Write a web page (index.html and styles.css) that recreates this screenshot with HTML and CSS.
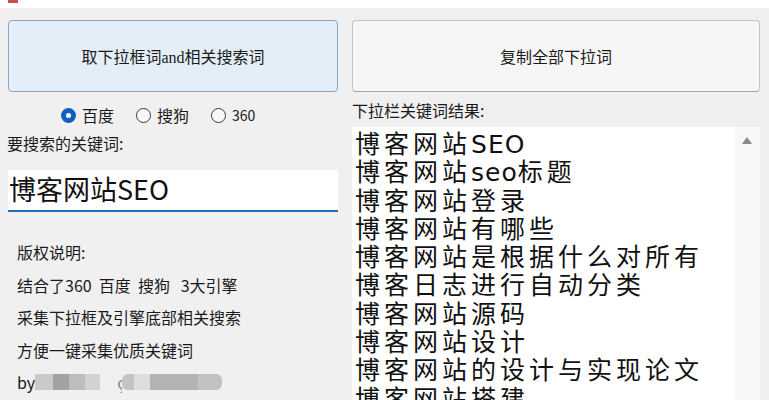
FILE: index.html
```html
<!DOCTYPE html>
<html lang="zh">
<head>
<meta charset="utf-8">
<title>下拉词采集</title>
<link rel="stylesheet" href="styles.css">
</head>
<body>
<div class="titlebar"><span class="appicon"></span></div>
<div class="main">
  <div class="col left">
    <button class="btn primary">取下拉框词<span class="serif">and</span>相关搜索词</button>
    <div class="radios">
      <label class="radio"><span class="dot checked"></span>百度</label>
      <label class="radio"><span class="dot"></span>搜狗</label>
      <label class="radio small"><span class="dot"></span>360</label>
    </div>
    <div class="label">要搜索的关键词:</div>
    <div class="input">博客网站SEO</div>
    <div class="notes">
      <div>版权说明:</div>
      <div>结合了360&nbsp; 百度&nbsp; 搜狗&nbsp;&nbsp; 3大引擎</div>
      <div>采集下拉框及引擎底部相关搜索</div>
      <div>方便一键采集优质关键词</div>
      <div class="by">by<span class="blur b1"></span><span class="blur b2"></span><span class="blur b3"></span><span class="blur b4"></span><span class="gap"></span><span class="ch">ç</span><span class="blur b5"></span><span class="blur b6"></span><span class="blur b7"></span><span class="blur b8"></span></div>
    </div>
  </div>
  <div class="col right">
    <button class="btn">复制全部下拉词</button>
    <div class="label">下拉栏关键词结果:</div>
    <div class="listbox">
      <div class="items">
        <div class="item">博客网站<span class="lat">SEO</span></div>
        <div class="item">博客网站<span class="lat">seo</span>标题</div>
        <div class="item">博客网站登录</div>
        <div class="item">博客网站有哪些</div>
        <div class="item">博客网站是根据什么对所有</div>
        <div class="item">博客日志进行自动分类</div>
        <div class="item">博客网站源码</div>
        <div class="item">博客网站设计</div>
        <div class="item">博客网站的设计与实现论文</div>
        <div class="item">博客网站搭建</div>
      </div>
      <div class="scrollbar"><span class="arrow"></span></div>
    </div>
  </div>
</div>
</body>
</html>
```
FILE: styles.css
```css
html, body {
  margin: 0;
  padding: 0;
  height: 100%;
  overflow: hidden;
}
body {
  background: #f0f0f0;
  font-family: "Noto Sans CJK SC", "Noto Sans", sans-serif;
  color: #1a1a1a;
}
.titlebar {
  height: 8px;
  background: #ffffff;
}
.appicon {
  display: block;
  margin-left: 8px;
  width: 10px;
  height: 3px;
  background: #c8504a;
}
.main {
  display: flex;
  gap: 14px;
  padding-left: 8px;
}
.col {
  display: flex;
  flex-direction: column;
}
.left { width: 330px; }
.right { width: 408px; }
.btn {
  margin-top: 12px;
  height: 72px;
  border: 1px solid #c3c3c3;
  border-bottom-color: #a6a6a6;
  border-radius: 4px;
  background: #f6f6f6;
  font-family: "Noto Sans CJK SC", sans-serif;
  font-size: 16px;
  color: #1a1a1a;
  padding: 0;
}
.btn.primary {
  background: #e4eef8;
  border: 1px solid #86a6c6;
}
.serif {
  font-family: "Liberation Serif", serif;
  font-size: 16px;
}
.radios {
  margin-top: 12px;
  height: 22px;
  display: flex;
  align-items: center;
  gap: 22px;
  padding-left: 53px;
  font-size: 16px;
}
.radio {
  display: flex;
  align-items: center;
}
.radio.small { font-size: 14px; }
.dot {
  width: 13px;
  height: 13px;
  border: 1px solid #3a3a3a;
  border-radius: 50%;
  background: #f7f7f7;
  margin-right: 6px;
  box-sizing: content-box;
}
.dot.checked {
  width: 5px;
  height: 5px;
  border: 5px solid #0f5fc0;
  background: #ffffff;
}
.label {
  font-size: 16px;
  line-height: 20px;
}
.left .label { margin-top: 7px; margin-left: -1px; }
.right .label { margin-top: 8px; }
.input {
  margin-top: 17px;
  height: 40px;
  background: #ffffff;
  border-bottom: 2px solid #1f6fba;
  font-size: 27px;
  line-height: 38px;
  padding-left: 1px;
  color: #111;
}
.notes {
  margin-top: 24px;
  padding-left: 9px;
  font-size: 16px;
  line-height: 32.5px;
}
.by {
  display: flex;
  align-items: center;
}
.blur {
  display: inline-block;
  height: 16px;
}
.b1 { width: 18px; background: #cacaca; }
.b2 { width: 16px; background: #a2a2a2; }
.b3 { width: 16px; background: #bdbdbd; }
.b4 { width: 15px; background: #d2d2d2; }
.gap { display: inline-block; width: 17px; }
.ch { color: #888; width: 5px; overflow: hidden; }
.b5 { width: 12px; background: #c4c4c4; border-radius: 6px 0 0 6px; }
.b6 { width: 16px; background: #dddddd; }
.b7 { width: 48px; background: #b3b3b3; }
.b8 { width: 24px; background: #c2c2c2; border-radius: 0 6px 6px 0; }
.listbox {
  margin-top: 7px;
  flex: 1;
  height: 280px;
  display: flex;
}
.items {
  flex: 1;
  background: #ffffff;
  padding: 1px 0 0 3px;
  font-size: 25px;
  letter-spacing: 4px;
  color: #111;
  white-space: nowrap;
  overflow: hidden;
}
.item {
  height: 28.3px;
  line-height: 28.3px;
}
.lat {
  font-family: "DejaVu Sans", sans-serif;
  letter-spacing: 1px;
  line-height: 1;
}
.scrollbar {
  width: 25px;
  background: #f7f7f7;
  position: relative;
}
.arrow {
  position: absolute;
  left: 7px;
  top: 10px;
  width: 0;
  height: 0;
  border-left: 5px solid transparent;
  border-right: 5px solid transparent;
  border-bottom: 7px solid #8a8a8a;
}
```
